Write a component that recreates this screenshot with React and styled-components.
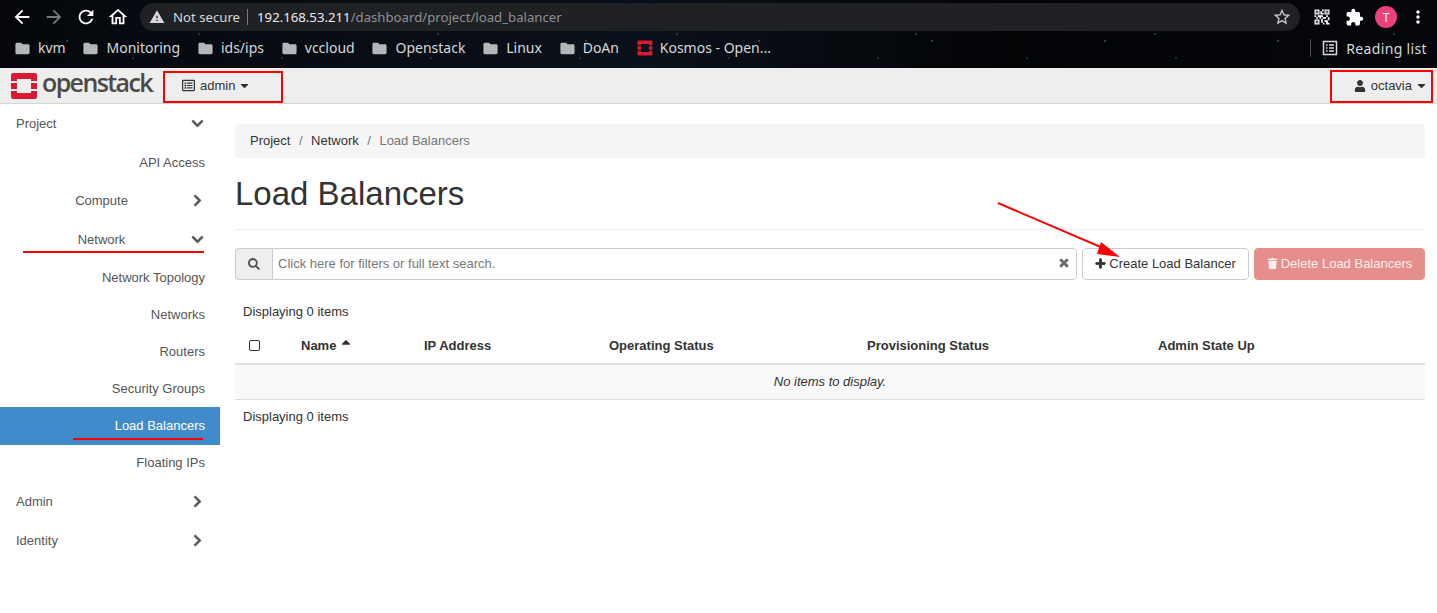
import React from "react";
import styled, { createGlobalStyle } from "styled-components";
import {
  FaCaretDown,
  FaCaretUp,
  FaChevronDown,
  FaChevronRight,
  FaPlus,
  FaRegListAlt,
  FaSearch,
  FaTimes,
  FaTrash,
  FaUser,
} from "react-icons/fa";
import {
  MdArrowBack,
  MdArrowForward,
  MdExtension,
  MdFolder,
  MdMoreVert,
  MdOutlineHome,
  MdQrCode2,
  MdRefresh,
  MdStarBorder,
  MdWarning,
} from "react-icons/md";

const GlobalStyle = createGlobalStyle`
  html, body {
    margin: 0;
    padding: 0;
    background: #fff;
  }
  body {
    font-family: "Liberation Sans", Arial, sans-serif;
    font-size: 13px;
    color: #333;
  }
`;

const Page = styled.div`
  position: relative;
  width: 1437px;
  height: 613px;
  overflow: hidden;
  background: #fff;
`;

/* browser chrome */
const Chrome = styled.header`
  height: 68px;
  box-sizing: border-box;
  padding-top: 3px;
  color: #fff;
  font-family: "Noto Sans", sans-serif;
  background-color: #020203;
  background-image:
    radial-gradient(1px 1px at 20px 12px, #3d5a4a 50%, transparent 100%),
    radial-gradient(1px 1px at 67px 41px, #50606a 50%, transparent 100%),
    radial-gradient(1px 1px at 133px 58px, #2f4a3c 50%, transparent 100%),
    radial-gradient(1px 1px at 199px 34px, #425560 50%, transparent 100%),
    linear-gradient(90deg, #05070c 0%, #0b111a 45%, #030406 70%, #05070c 100%);
  background-size: 211px 68px, 173px 68px, 149px 68px, 239px 68px, 100% 100%;
`;

const ToolRow = styled.div`
  display: flex;
  align-items: center;
  height: 28px;
`;

const NavButtons = styled.div`
  display: flex;
  align-items: center;
  gap: 10px;
  padding-left: 11px;
  width: 140px;
  box-sizing: border-box;
  font-size: 22px;
`;

const NavIcon = styled.span`
  display: flex;
  color: ${(p) => (p.$dim ? "#77797c" : "#fff")};
`;

const UrlBar = styled.div`
  display: flex;
  align-items: center;
  width: 1160px;
  height: 28px;
  box-sizing: border-box;
  padding: 0 8px 0 9px;
  border-radius: 14px;
  background: #202124;
  font-size: 13.2px;
  color: #e8eaed;
`;

const NotSecure = styled.span`
  display: flex;
  align-items: center;
  gap: 8px;
  padding-right: 7px;
  border-right: 1px solid #7a7c80;
  height: 16px;
  line-height: 16px;
  color: #d6d8da;
`;

const Host = styled.span`
  padding-left: 9px;
  color: #e8eaed;
`;

const UrlPath = styled.span`
  color: #8d9094;
`;

const StarSlot = styled.span`
  display: flex;
  margin-left: auto;
  font-size: 20px;
  color: #c8cacc;
`;

const Extensions = styled.div`
  display: flex;
  align-items: center;
  padding-left: 6px;
`;

const ExtSlot = styled.span`
  display: flex;
  align-items: center;
  justify-content: center;
  width: 32px;
  font-size: ${(p) => p.$size || 20}px;
  color: #fff;
`;

const Avatar = styled.span`
  display: flex;
  align-items: center;
  justify-content: center;
  width: 22px;
  height: 22px;
  border-radius: 50%;
  background: #ec407a;
  font-size: 12px;
  color: #fff;
`;

const BookmarkRow = styled.div`
  display: flex;
  align-items: center;
  height: 30px;
  margin-top: 2px;
  padding-left: 15px;
  font-size: 14px;
  color: #d8d9db;
`;

const Bookmark = styled.span`
  display: flex;
  align-items: center;
  gap: 7px;
  margin-right: 17.8px;
  line-height: 18px;
`;

const Folder = styled(MdFolder)`
  font-size: 17px;
  color: #b5b6b8;
  margin-left: -1px;
`;

const ReadingList = styled.span`
  display: flex;
  align-items: center;
  gap: 8px;
  margin-left: auto;
  margin-right: 10px;
  padding-left: 11px;
  border-left: 1px solid #4a4c50;
  height: 18px;
  letter-spacing: 0.35px;
`;

/* openstack top bar */
const TopBar = styled.nav`
  display: flex;
  align-items: center;
  height: 36px;
  box-sizing: border-box;
  background: #eee;
  border-bottom: 1px solid #d5d5d5;
`;

const Brand = styled.div`
  display: flex;
  align-items: center;
  gap: 4px;
  width: 182px;
  box-sizing: border-box;
  padding-left: 10px;
`;

const BrandName = styled.span`
  font-family: "Open Sans", sans-serif;
  font-size: 25px;
  font-weight: 600;
  line-height: 30px;
  letter-spacing: -1.6px;
  color: #4d4a48;
  small {
    font-size: 9px;
    letter-spacing: 0;
  }
`;

const TopMenu = styled.div`
  display: flex;
  align-items: center;
  gap: 5px;
  color: #333;
`;

const UserMenu = styled(TopMenu)`
  margin-left: auto;
  margin-right: 9px;
`;

const MenuCaret = styled(FaCaretDown)`
  font-size: 13px;
  margin-left: -2px;
`;

const Body = styled.div`
  display: flex;
`;

/* sidebar */
const Sidebar = styled.aside`
  width: 220px;
  flex: none;
`;

const Row = styled.div`
  display: flex;
  align-items: center;
  height: ${(p) => p.$h || 39}px;
  box-sizing: border-box;
  padding: 0 15px ${(p) => (p.$lift ? 2 : 0)}px 16px;
  color: ${(p) => (p.$active ? "#fff" : "#555")};
  background: ${(p) => (p.$active ? "#428bca" : "transparent")};
`;

const TopLabel = styled.span`
  margin-right: auto;
`;

const MidLabel = styled.span`
  flex: 1;
  text-align: center;
  padding-right: 3px;
`;

const SubLabel = styled.span`
  margin-left: auto;
`;

const Chevron = styled.span`
  display: flex;
  width: 15px;
  justify-content: center;
  font-size: 13px;
  color: #555;
  svg {
    stroke: currentColor;
    stroke-width: 25px;
  }
`;

/* content */
const Main = styled.main`
  flex: 1;
  padding: 20px 12px 0 15px;
`;

const Breadcrumb = styled.div`
  display: flex;
  align-items: center;
  height: 34px;
  box-sizing: border-box;
  padding: 0 15px 2px;
  background: #f5f5f5;
  border-radius: 4px;
  color: #333;
`;

const Crumb = styled.span`
  color: ${(p) => (p.$current ? "#777" : "#333")};
`;

const CrumbSep = styled.span`
  padding: 0 8.5px;
  color: #777;
`;

const PageTitle = styled.h1`
  margin: 0;
  padding: 16px 0 16px;
  font-size: 33px;
  line-height: 39px;
  font-weight: 400;
  color: #333;
  border-bottom: 1px solid #eee;
`;

const Toolbar = styled.div`
  display: flex;
  gap: 5px;
  margin-top: 18px;
  height: 32px;
`;

const SearchGroup = styled.div`
  display: flex;
  flex: 1;
`;

const SearchAddon = styled.span`
  display: flex;
  align-items: center;
  justify-content: center;
  width: 37px;
  box-sizing: border-box;
  padding-bottom: 1px;
  background: #eee;
  border: 1px solid #ccc;
  border-right: 0;
  border-radius: 4px 0 0 4px;
  color: #555;
  font-size: 12px;
`;

const SearchField = styled.div`
  display: flex;
  align-items: center;
  justify-content: space-between;
  flex: 1;
  box-sizing: border-box;
  padding: 0 6px 2px 5px;
  border: 1px solid #ccc;
  border-radius: 0 4px 4px 0;
  color: #777;
  svg {
    color: #666;
    font-size: 12px;
    stroke: currentColor;
    stroke-width: 30px;
  }
`;

const Button = styled.div`
  display: flex;
  align-items: center;
  justify-content: center;
  gap: 3px;
  width: ${(p) => p.$w}px;
  box-sizing: border-box;
  padding-bottom: 2px;
  border: 1px solid ${(p) => (p.$danger ? "#e58e8c" : "#ccc")};
  border-radius: 4px;
  background: ${(p) => (p.$danger ? "#e58e8c" : "#fff")};
  color: ${(p) => (p.$danger ? "#fbeeee" : "#333")};
  svg {
    font-size: 11px;
    stroke: currentColor;
    stroke-width: ${(p) => (p.$danger ? 0 : 40)}px;
  }
`;

const Count = styled.div`
  height: 18px;
  line-height: 18px;
  padding-left: 8px;
  color: #333;
  margin-top: ${(p) => p.$top}px;
`;

const TableRow = styled.div`
  display: grid;
  grid-template-columns: 58px 123px 185px 258px 291px 275px;
  align-items: center;
`;

const HeadRow = styled(TableRow)`
  height: 36px;
  margin-top: 6px;
  border-bottom: 2px solid #ddd;
  font-weight: 700;
`;

const Th = styled.div`
  display: flex;
  align-items: center;
  gap: 3px;
  padding-left: 8px;
  svg {
    font-size: 14px;
    margin-top: -6px;
  }
`;

const CheckBox = styled.span`
  display: block;
  width: 9px;
  height: 9px;
  margin-left: 6px;
  border: 1px solid #333;
  border-radius: 2px;
`;

const EmptyRow = styled.div`
  height: 35px;
  line-height: 34px;
  box-sizing: border-box;
  text-align: center;
  font-style: italic;
  background: #f9f9f9;
  border-bottom: 1px solid #ddd;
`;

/* hand-drawn annotations on top of the screenshot */
const RedBox = styled.div`
  position: absolute;
  top: ${(p) => p.$top}px;
  left: ${(p) => p.$left}px;
  width: ${(p) => p.$w}px;
  height: ${(p) => p.$h}px;
  box-sizing: border-box;
  border: 2px solid #f00;
`;

const Marks = styled.svg`
  position: absolute;
  inset: 0;
  pointer-events: none;
`;

const OpenStackMark = ({ size = 28 }) => (
  <svg width={size} height={size} viewBox="0 0 28 28">
    <path
      fill="#da1a32"
      d="M3 1h22a2 2 0 0 1 2 2v6h-6V7H7v2H1V3a2 2 0 0 1 2-2zM1 11h6v6H1zM21 11h6v6h-6zM1 19h6v2h14v-2h6v6a2 2 0 0 1-2 2H3a2 2 0 0 1-2-2z"
    />
  </svg>
);

const ReadingIcon = () => (
  <svg width="16" height="16" viewBox="0 0 16 16" fill="none" stroke="#d8d9db">
    <rect x="1.5" y="1.5" width="13" height="13" strokeWidth="1.5" />
    <path strokeWidth="1.5" d="M4 5h1.5M7 5h5M4 8h1.5M7 8h5M4 11h1.5M7 11h5" />
  </svg>
);

const folders = ["kvm", "Monitoring", "ids/ips", "vccloud", "Openstack", "Linux", "DoAn"];

const columns = ["IP Address", "Operating Status", "Provisioning Status", "Admin State Up"];

export default function App() {
  return (
    <Page>
      <GlobalStyle />
      <Chrome>
        <ToolRow>
          <NavButtons>
            <NavIcon><MdArrowBack /></NavIcon>
            <NavIcon $dim><MdArrowForward /></NavIcon>
            <NavIcon><MdRefresh /></NavIcon>
            <NavIcon><MdOutlineHome /></NavIcon>
          </NavButtons>
          <UrlBar>
            <NotSecure><MdWarning size={16} />Not secure</NotSecure>
            <Host>192.168.53.211</Host>
            <UrlPath>/dashboard/project/load_balancer</UrlPath>
            <StarSlot><MdStarBorder /></StarSlot>
          </UrlBar>
          <Extensions>
            <ExtSlot $size={20}><MdQrCode2 /></ExtSlot>
            <ExtSlot $size={19}><MdExtension /></ExtSlot>
            <ExtSlot><Avatar>T</Avatar></ExtSlot>
            <ExtSlot $size={20}><MdMoreVert /></ExtSlot>
          </Extensions>
        </ToolRow>
        <BookmarkRow>
          {folders.map((name) => (
            <Bookmark key={name}><Folder />{name}</Bookmark>
          ))}
          <Bookmark><OpenStackMark size={16} />Kosmos - Open...</Bookmark>
          <ReadingList><ReadingIcon />Reading list</ReadingList>
        </BookmarkRow>
      </Chrome>

      <TopBar>
        <Brand>
          <OpenStackMark size={28} />
          <BrandName>openstack<small>.</small></BrandName>
        </Brand>
        <TopMenu>
          <FaRegListAlt size={13} />
          admin
          <MenuCaret />
        </TopMenu>
        <UserMenu>
          <FaUser size={12} />
          octavia
          <MenuCaret />
        </UserMenu>
      </TopBar>

      <Body>
        <Sidebar>
          <Row><TopLabel>Project</TopLabel><Chevron><FaChevronDown /></Chevron></Row>
          <Row $h={38}><SubLabel>API Access</SubLabel></Row>
          <Row><MidLabel>Compute</MidLabel><Chevron><FaChevronRight /></Chevron></Row>
          <Row><MidLabel>Network</MidLabel><Chevron><FaChevronDown /></Chevron></Row>
          <Row $h={37}><SubLabel>Network Topology</SubLabel></Row>
          <Row $h={37}><SubLabel>Networks</SubLabel></Row>
          <Row $h={37}><SubLabel>Routers</SubLabel></Row>
          <Row $h={37}><SubLabel>Security Groups</SubLabel></Row>
          <Row $h={38} $active $lift><SubLabel>Load Balancers</SubLabel></Row>
          <Row $h={37} $lift><SubLabel>Floating IPs</SubLabel></Row>
          <Row><TopLabel>Admin</TopLabel><Chevron><FaChevronRight /></Chevron></Row>
          <Row><TopLabel>Identity</TopLabel><Chevron><FaChevronRight /></Chevron></Row>
        </Sidebar>

        <Main>
          <Breadcrumb>
            <Crumb>Project</Crumb>
            <CrumbSep>/</CrumbSep>
            <Crumb>Network</Crumb>
            <CrumbSep>/</CrumbSep>
            <Crumb $current>Load Balancers</Crumb>
          </Breadcrumb>
          <PageTitle>Load Balancers</PageTitle>
          <Toolbar>
            <SearchGroup>
              <SearchAddon><FaSearch /></SearchAddon>
              <SearchField>
                Click here for filters or full text search.
                <FaTimes />
              </SearchField>
            </SearchGroup>
            <Button $w={167}><FaPlus />Create Load Balancer</Button>
            <Button $w={171} $danger><FaTrash />Delete Load Balancers</Button>
          </Toolbar>
          <Count $top={23}>Displaying 0 items</Count>
          <HeadRow>
            <Th><CheckBox /></Th>
            <Th>Name <FaCaretUp /></Th>
            {columns.map((c) => (
              <Th key={c}>{c}</Th>
            ))}
          </HeadRow>
          <EmptyRow>No items to display.</EmptyRow>
          <Count $top={8}>Displaying 0 items</Count>
        </Main>
      </Body>

      <RedBox $top={71} $left={163} $w={120} $h={32} />
      <RedBox $top={70} $left={1330} $w={103} $h={33} />
      <Marks width="1437" height="613">
        <path d="M23 252H204M73 439H203" stroke="#f00" strokeWidth="2" fill="none" />
        <path d="M998 203L1110 251" stroke="#f00" strokeWidth="2" fill="none" />
        <path d="M1120 257L1097 254L1101 242Z" fill="#f00" />
      </Marks>
    </Page>
  );
}
